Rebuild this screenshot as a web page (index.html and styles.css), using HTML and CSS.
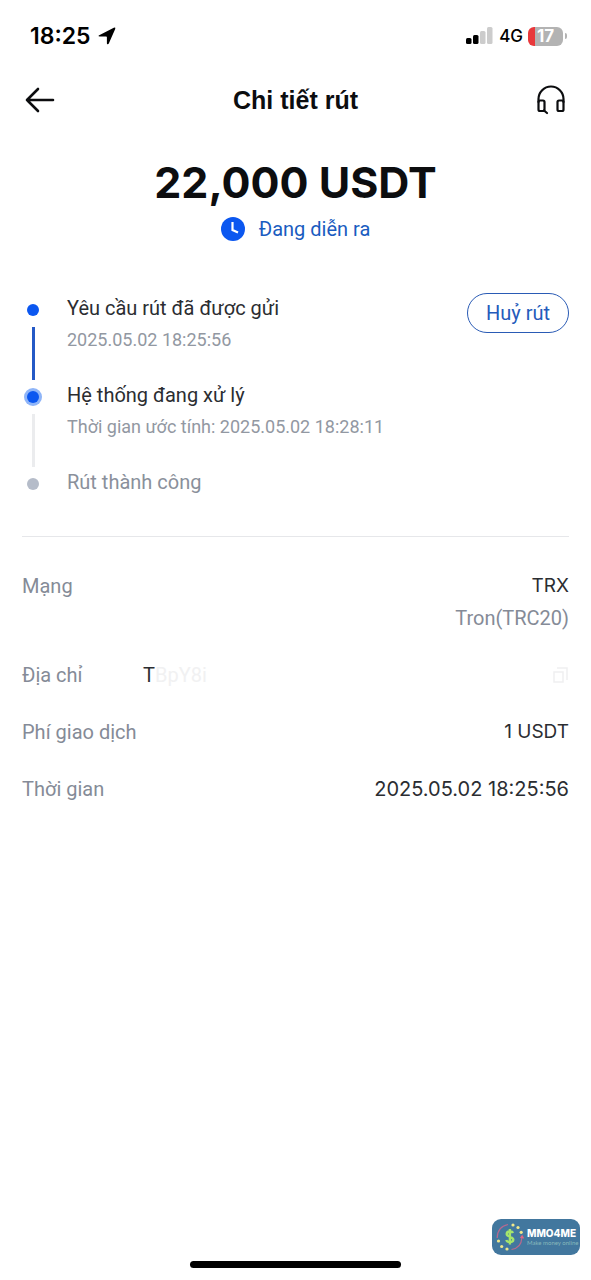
FILE: index.html
```html
<!DOCTYPE html>
<html lang="vi">
<head>
<meta charset="utf-8">
<meta name="viewport" content="width=device-width, initial-scale=1">
<title>Chi tiết rút</title>
<link rel="stylesheet" href="styles.css">
</head>
<body>
<div class="screen">
  <div class="status-bar">
    <div class="status-time">
      <span>18:25</span>
      <svg class="location-icon" viewBox="0 0 18 18" aria-hidden="true"><path d="M1.200 8.200 15.800.800q2-.8 1.400 1.200L10.800 16.500c-.5 1.200-1.900 1-1.900-.3V10.200q0-.8-.8-.8H1.700C.2 9.400 0 8.700 1.200 8.200Z"/></svg>
    </div>
    <div class="status-right">
      <svg class="signal-icon" viewBox="0 0 28 18" aria-hidden="true">
        <rect x="0" y="11" width="5.500" height="6" rx="1.500"/><rect x="7" y="8" width="5.500" height="9" rx="1.500"/>
        <g fill="#ccc"><rect x="14" y="4" width="5.500" height="13" rx="1.500"/><rect x="21" y="0" width="5.500" height="17" rx="1.500"/></g>
      </svg>
      <span class="network">4G</span>
      <span class="battery"><span class="battery-body">17</span><span class="battery-cap"></span></span>
    </div>
  </div>

  <header class="nav">
    <button class="icon-button" type="button" aria-label="Quay lại">
      <svg class="nav-icon" viewBox="0 0 30 30" aria-hidden="true"><path d="M28 15H2M13 4 2 15l11 11"/></svg>
    </button>
    <h1 class="nav-title">Chi tiết rút</h1>
    <button class="icon-button" type="button" aria-label="Hỗ trợ">
      <svg class="nav-icon headset" viewBox="0 0 30 30" aria-hidden="true"><path d="M2.500 17v-3a12.500 12.500 0 0 1 25 0v3"/><rect x="2.500" y="15.500" width="6" height="10.500" rx="1.500"/><rect x="21.500" y="15.500" width="6" height="10.500" rx="1.500"/><path d="m8 25.500 3 2.500"/></svg>
    </button>
  </header>

  <main class="content">
    <section class="summary">
      <p class="amount">22,000 USDT</p>
      <p class="state">
        <svg class="clock-icon" viewBox="0 0 24 24" aria-hidden="true"><circle cx="12" cy="12" r="12" fill="#0b57f0"/><path d="M11.500 5v8l5.500 2.500" fill="none" stroke="#fff" stroke-width="2.200"/></svg>
        <span>Đang diễn ra</span>
      </p>
    </section>

    <section class="progress">
      <ol class="timeline">
        <li class="step step-done">
          <span class="rail"><span class="dot"></span><span class="line"></span></span>
          <div class="step-text"><p class="step-title">Yêu cầu rút đã được gửi</p><p class="step-note">2025.05.02 18:25:56</p></div>
        </li>
        <li class="step step-current">
          <span class="rail"><span class="dot"></span><span class="line"></span></span>
          <div class="step-text"><p class="step-title">Hệ thống đang xử lý</p><p class="step-note">Thời gian ước tính: 2025.05.02 18:28:11</p></div>
        </li>
        <li class="step step-pending">
          <span class="rail"><span class="dot"></span></span>
          <div class="step-text"><p class="step-title">Rút thành công</p></div>
        </li>
      </ol>
      <button class="cancel" type="button">Huỷ rút</button>
    </section>

    <dl class="details">
      <div class="row"><dt>Mạng</dt><dd>TRX<span class="sub">Tron(TRC20)</span></dd></div>
      <div class="row"><dt>Địa chỉ</dt>
        <dd class="address"><span class="address-text">T<span class="faded">BpY8i</span></span>
          <button class="copy" type="button" aria-label="Sao chép"><svg viewBox="0 0 16 18" aria-hidden="true"><path d="M4 2h10v12M1 6h9v10H1z"/></svg></button></dd></div>
      <div class="row"><dt>Phí giao dịch</dt><dd>1 USDT</dd></div>
      <div class="row"><dt>Thời gian</dt><dd class="time">2025.05.02 18:25:56</dd></div>
    </dl>
  </main>

  <footer class="footer">
    <div class="brand">
      <svg class="brand-icon" viewBox="0 0 28 32" aria-hidden="true">
        <g fill="none" stroke="#b8698f" stroke-width="1.200"><path d="M1.200 17C1.200 10 5 5 12 3.500"/><path d="M25.800 17c-.3 6-4 10.500-10.300 11.500"/></g>
        <path d="m23.800 17 2.400-3.200 2 3.600Z" fill="#e06482"/>
        <g fill="#f0e88b"><circle cx="17" cy="4" r="1.600"/><circle cx="22" cy="6.500" r="1.600"/><circle cx="25.200" cy="11.300" r="1.600"/><circle cx="2.500" cy="20" r="1.600"/><circle cx="5.700" cy="25.500" r="1.600"/><circle cx="11" cy="28" r="1.600"/></g>
        <path d="M17 12c-.8-2.200-6.300-2.200-6.300 1 0 3.200 6.600 2.400 6.600 5.700 0 3.400-6.200 3-7 .3M13.900 8v15.500" fill="none" stroke="#a5e56c" stroke-width="2.400"/>
      </svg>
      <span class="brand-text"><strong>MMO4ME</strong><small>Make money online</small></span>
    </div>
    <div class="home-indicator"></div>
  </footer>
</div>
</body>
</html>
```
FILE: styles.css
```css
* { box-sizing: border-box; }

body {
  margin: 0;
  background: #fff;
  color: #2b2d31;
  font-family: Roboto, "Noto Sans", sans-serif;
  font-size: 20px;
  line-height: 24px;
}

p, h1, ol, dl, dd { margin: 0; padding: 0; }
ol { list-style: none; }
button { font: inherit; cursor: pointer; }
svg { display: block; flex-shrink: 0; }

.screen {
  display: flex;
  flex-direction: column;
  min-height: 100vh;
}

.status-bar {
  display: flex;
  align-items: center;
  justify-content: space-between;
  padding: 24px 24px 0 30px;
  color: #000;
  font-family: Inter, sans-serif;
}

.status-time {
  display: flex;
  align-items: center;
  gap: 7px;
  font-size: 23px;
  font-weight: 600;
}

.location-icon { width: 18px; height: 18px; }

.status-right { display: flex; align-items: center; gap: 5px; }
.signal-icon { width: 28px; height: 18px; }
.network { font-size: 17px; font-weight: 500; }

.battery { display: flex; align-items: center; gap: 2px; }

.battery-body {
  width: 35px;
  border-radius: 6px;
  background: linear-gradient(to right, #e8383b 7px, #b3b3b3 7px);
  color: #fff;
  font-size: 17px;
  font-weight: 700;
  line-height: 19px;
  text-align: center;
}

.battery-cap {
  width: 2px;
  height: 6px;
  border-radius: 0 2px 2px 0;
  background: #b3b3b3;
}

.nav {
  display: grid;
  grid-template-columns: 30px 1fr 30px;
  align-items: center;
  padding: 37px 25px 0;
}

.icon-button { padding: 0; border: 0; background: none; }

.nav-icon {
  width: 30px;
  height: 30px;
  fill: none;
  stroke: #0c0d0f;
  stroke-width: 2.6;
  stroke-linecap: round;
  stroke-linejoin: round;
}

.headset { stroke-width: 2.2; }

.nav-title {
  color: #0c0d0f;
  font-family: "Liberation Sans", sans-serif;
  font-size: 25px;
  font-weight: 700;
  line-height: 30px;
  text-align: center;
}

.content { flex: 1; padding: 41px 22px 0; }

.summary { text-align: center; }

.amount {
  color: #0c0d0f;
  font-family: Inter, sans-serif;
  font-size: 43px;
  font-weight: 700;
  line-height: 52px;
}

.state {
  display: flex;
  align-items: center;
  justify-content: center;
  gap: 14px;
  margin-top: 9px;
  color: #1a5cc0;
}

.clock-icon { width: 24px; height: 24px; }

.progress {
  display: flex;
  justify-content: space-between;
  align-items: flex-start;
  margin-top: 52px;
  padding-bottom: 42px;
  border-bottom: 1px solid #e6e7ea;
}

.timeline { padding-top: 3px; }

.step { display: flex; gap: 23px; min-height: 87px; }
.step-pending { min-height: 0; }

.rail {
  display: flex;
  flex-direction: column;
  align-items: center;
  gap: 11px;
  width: 22px;
  padding-top: 8px;
}

.dot {
  width: 12px;
  height: 12px;
  border-radius: 50%;
  background: #0b57f0;
}

.line { width: 3px; height: 53px; background: #2459c6; }

.step-current .dot { box-shadow: 0 0 0 3px #8fb5f8; }
.step-current .line { background: #ebecee; }
.step-pending .dot { background: #b5bcc9; }

.step-note { margin-top: 8px; color: #9298a2; font-size: 18px; }
.step-pending .step-title { color: #8a909b; }

.cancel {
  height: 40px;
  padding: 0 18px;
  border: 1px solid #2a5bb5;
  border-radius: 20px;
  background: #fff;
  color: #245bbb;
}

.details {
  display: flex;
  flex-direction: column;
  gap: 33px;
  padding-top: 37px;
}

.row { display: flex; justify-content: space-between; gap: 24px; }
.row dt { color: #858b97; }

.row dd {
  font-family: Inter, sans-serif;
  font-size: 19px;
  text-align: right;
}

.row .time { font-size: 20px; }

.sub {
  display: block;
  margin-top: 8px;
  color: #858b97;
  font-family: Roboto, sans-serif;
  font-size: 20px;
}

.row .address {
  display: flex;
  flex: 1;
  align-items: center;
  justify-content: space-between;
  max-width: 426px;
  font-family: Roboto, sans-serif;
  font-size: 20px;
}

.faded { color: #f1f1f2; }

.copy { padding: 0; border: 0; background: none; }

.copy svg {
  width: 16px;
  height: 18px;
  fill: none;
  stroke: #f0f0f1;
  stroke-width: 1.5;
}

.footer {
  display: flex;
  flex-direction: column;
  align-items: center;
  gap: 6px;
  padding: 0 11px 12px;
}

.brand {
  display: flex;
  align-items: center;
  align-self: flex-end;
  gap: 3px;
  width: 88px;
  height: 36px;
  padding-left: 4px;
  border-radius: 9px;
  background: #42779e;
}

.brand-icon { width: 28px; height: 32px; }

.brand-text { display: flex; flex-direction: column; color: #fff; font-family: Inter, sans-serif; }
.brand-text strong { font-size: 10px; font-weight: 800; line-height: 11px; }
.brand-text small { color: #87b9bc; font-family: Lato, sans-serif; font-size: 6px; line-height: 7px; }

.home-indicator {
  width: 37%;
  height: 7px;
  border-radius: 4px;
  background: #000;
}
```
